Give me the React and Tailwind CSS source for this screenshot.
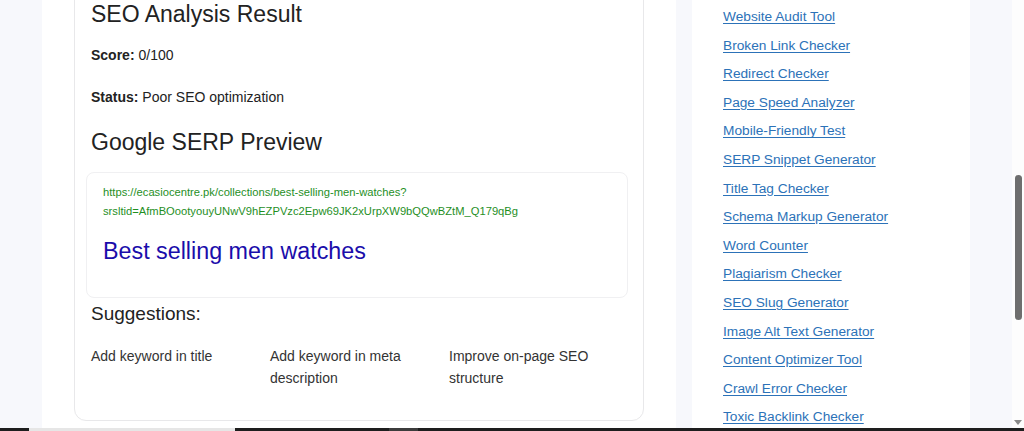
const sidebarLinks = [
  "Website Audit Tool",
  "Broken Link Checker",
  "Redirect Checker",
  "Page Speed Analyzer",
  "Mobile-Friendly Test",
  "SERP Snippet Generator",
  "Title Tag Checker",
  "Schema Markup Generator",
  "Word Counter",
  "Plagiarism Checker",
  "SEO Slug Generator",
  "Image Alt Text Generator",
  "Content Optimizer Tool",
  "Crawl Error Checker",
  "Toxic Backlink Checker",
];

const suggestions = [
  "Add keyword in title",
  "Add keyword in meta description",
  "Improve on-page SEO structure",
];

export default function App() {
  return (
    <div className="h-[431px] w-[1024px] overflow-hidden flex flex-col bg-[#f7f8fc] font-['Liberation_Sans',Arial,sans-serif] text-[#222]">
      <div className="h-[428px] flex overflow-hidden">
        {/* MAIN */}
        <div className="ml-[42px] w-[634px] bg-white pl-[32px]">
          <div className="w-[570px] -mt-[20px] pt-[19px] pl-[11px] pr-[15px] pb-[31px] border border-[#e8e8ea] rounded-xl">
            <h2 className="ml-[5px] text-[23px] leading-[28px] text-[#222]">SEO Analysis Result</h2>

            <p className="ml-[5px] mt-[17px] text-[14px] leading-[20px] text-[#222]">
              <b>Score:</b> 0/100
            </p>
            <p className="ml-[5px] mt-[22px] text-[14px] leading-[20px] text-[#222]">
              <b>Status:</b> Poor SEO optimization
            </p>

            <h2 className="ml-[5px] mt-[21px] text-[23px] leading-[28px] text-[#222]">Google SERP Preview</h2>

            <div className="mt-[16px] border border-[#f0f0f2] rounded-lg pl-4 pr-4 pt-[10px] pb-[32px]">
              <p className="text-[11.2px] leading-[19px] text-[#1f8f1f] break-all">
                https://ecasiocentre.pk/collections/best-selling-men-watches?
                <br />
                srsltid=AfmBOootyouyUNwV9hEZPVzc2Epw69JK2xUrpXW9bQQwBZtM_Q179qBg
              </p>
              <p className="mt-[16px] text-[23.3px] leading-[28px] text-[#1a0dab]">Best selling men watches</p>
            </div>

            <h3 className="ml-[5px] mt-[4px] text-[19px] leading-[24px] text-[#222]">Suggestions:</h3>

            <div className="ml-[5px] mt-[19px] grid grid-cols-3 gap-0">
              {suggestions.map((s) => (
                <p key={s} className="pr-4 text-[14px] leading-[22px] text-[#333]">
                  {s}
                </p>
              ))}
            </div>
          </div>
        </div>

        {/* SIDEBAR */}
        <div className="ml-[16px] w-[278px] bg-white pl-[31px] pt-[7px]">
          <ul className="flex flex-col gap-[8.6px]">
            {sidebarLinks.map((l) => (
              <li key={l} className="text-[13.7px] leading-[20px]">
                <a href="#" className="text-[#2c72b8] underline underline-offset-2">
                  {l}
                </a>
              </li>
            ))}
          </ul>
        </div>

        <div className="flex-1" />

        {/* SCROLLBAR */}
        <div className="w-[12px] bg-[#fdfdfd] flex flex-col items-center">
          <div className="mt-[175px] w-[7px] h-[145px] rounded-full bg-[#6e6e6e]" />
          <div className="flex-1" />
          <div className="mb-[3px] w-0 h-0 border-l-[4px] border-r-[4px] border-t-[5px] border-l-transparent border-r-transparent border-t-[#8a8a8a]" />
        </div>
      </div>

      {/* TASKBAR EDGE */}
      <div className="h-[3px] flex bg-[#1e1e1e]">
        <div className="ml-[29px] w-[206px] bg-[#e6e6e6]" />
        <div className="ml-[154px] w-[29px] bg-[#3c3c3c]" />
      </div>
    </div>
  );
}
